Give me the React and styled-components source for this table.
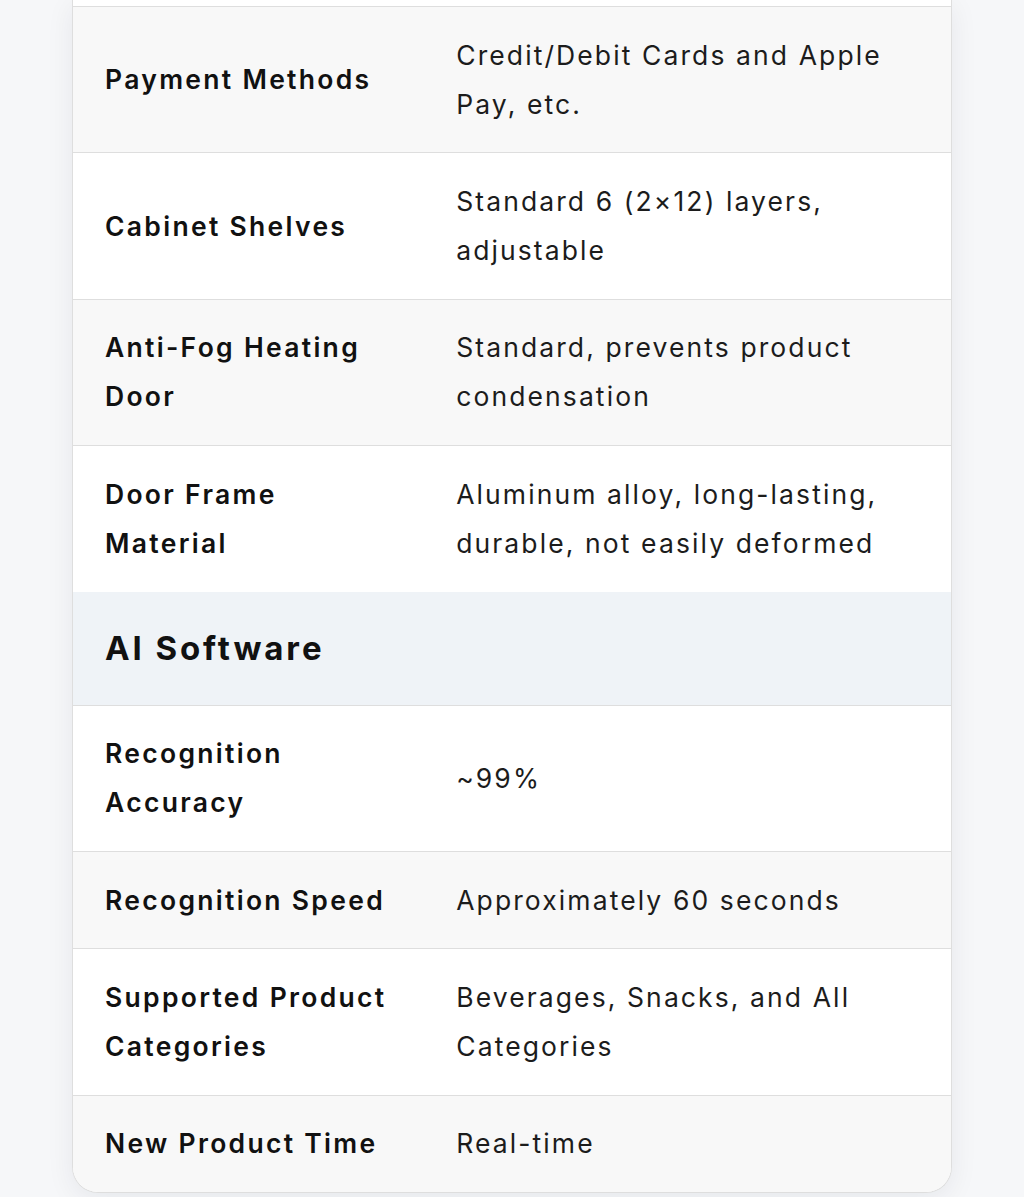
import React from 'react'
import styled, { createGlobalStyle } from 'styled-components'

const Global = createGlobalStyle`
    html, body {
        margin: 0;
        padding: 0;
        background: #f6f7f9;
        font-family: Inter, "Noto Sans", "Liberation Sans", sans-serif;
        -webkit-font-smoothing: antialiased;
    }
`;

const Page = styled.div`
    padding: 0 72px 5px 72px;
`;

const Card = styled.div`
    background: #fff;
    border: 1px solid #dedede;
    border-top: none;
    border-radius: 0 0 26px 26px;
    box-shadow: 0 6px 28px rgba(20, 30, 60, 0.07);
    overflow: hidden;
`;

const Cap = styled.div`
    height: 6px;
    background: #fff;
`;

const Table = styled.table`
    width: 100%;
    border-collapse: collapse;
    table-layout: fixed;
`;

const Row = styled.tr`
    background: ${p => (p.$alt ? '#f8f8f8' : '#fff')};
    border-top: 1px solid #dedede;
`;

const Cell = styled.td`
    box-sizing: border-box;
    padding: 23.7px 36px 23.7px 32px;
    font-size: 26.5px;
    line-height: 49px;
    vertical-align: middle;
`;

const Label = styled(Cell)`
    width: 40%;
    font-weight: 600;
    letter-spacing: 2.3px;
    color: #111;
`;

const Value = styled(Cell)`
    font-weight: 400;
    letter-spacing: 2.1px;
    color: #1c1c1c;
`;

const SectionRow = styled.tr`
    background: #eff3f7;
`;

const SectionTitle = styled.td`
    padding: 32px 32px;
    font-size: 33px;
    line-height: 49px;
    font-weight: 700;
    letter-spacing: 2.9px;
    color: #111;
`;

const hardware = [
    ['Payment Methods', 'Credit/Debit Cards and Apple Pay, etc.'],
    ['Cabinet Shelves', 'Standard 6 (2×12) layers, adjustable'],
    ['Anti-Fog Heating Door', 'Standard, prevents product condensation'],
    ['Door Frame Material', 'Aluminum alloy, long-lasting, durable, not easily deformed'],
];

const software = [
    ['Recognition Accuracy', '~99%'],
    ['Recognition Speed', 'Approximately 60 seconds'],
    ['Supported Product Categories', 'Beverages, Snacks, and All Categories'],
    ['New Product Time', 'Real-time'],
];

const App = () => {
    return (
        <Page>
            <Global />
            <Card>
                <Cap />
                <Table>
                    <tbody>
                        {hardware.map(([k, v], i) => (
                            <Row key={k} $alt={i % 2 === 0}>
                                <Label>{k}</Label>
                                <Value>{v}</Value>
                            </Row>
                        ))}
                        <SectionRow>
                            <SectionTitle colSpan={2}>AI Software</SectionTitle>
                        </SectionRow>
                        {software.map(([k, v], i) => (
                            <Row key={k} $alt={i % 2 === 1}>
                                <Label>{k}</Label>
                                <Value>{v}</Value>
                            </Row>
                        ))}
                    </tbody>
                </Table>
            </Card>
        </Page>
    )
}

export default App
